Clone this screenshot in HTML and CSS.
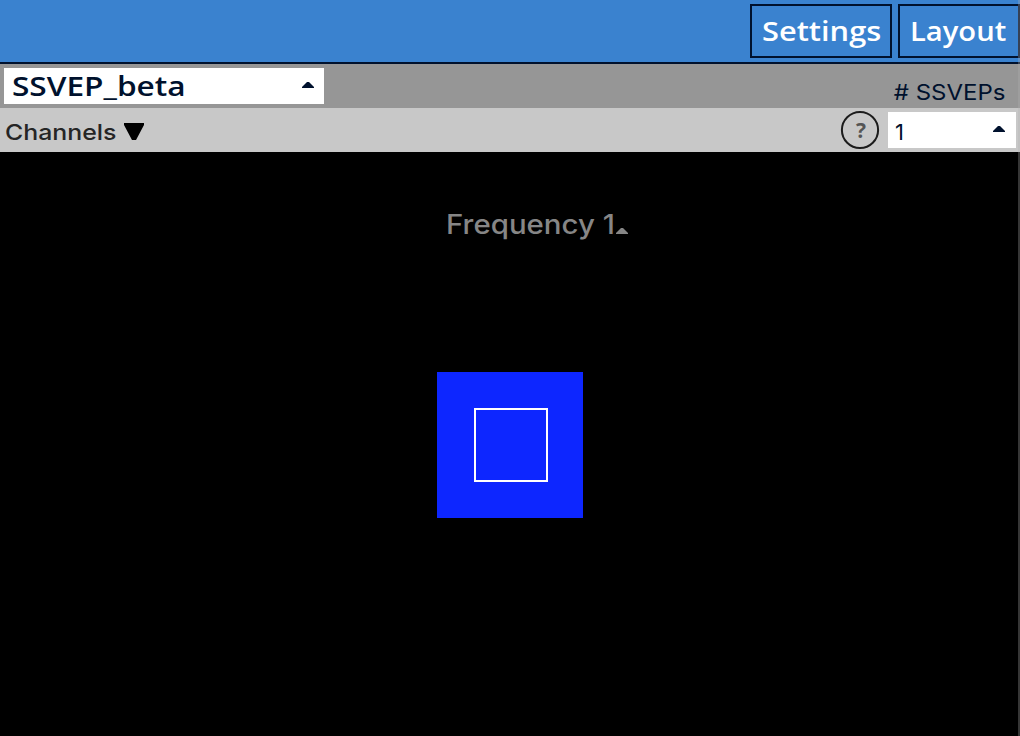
FILE: index.html
```html
<!DOCTYPE html>
<html lang="en">
<head>
<meta charset="utf-8">
<title>SSVEP_beta</title>
<link rel="stylesheet" href="styles.css">
</head>
<body>
<div class="app">
  <header class="topbar">
    <button class="btn settings"><span>Settings</span></button>
    <button class="btn layout"><span>Layout</span></button>
  </header>
  <div class="titlebar">
    <div class="select widget"><span class="widget-name">SSVEP_beta</span><svg class="arrow" width="12" height="6" viewBox="0 0 12 6"><path d="M5 0h2l5 5v1H0V5z"/></svg></div>
    <span class="count-label"># SSVEPs</span>
  </div>
  <div class="toolbar">
    <span class="channels">Channels</span>
    <svg class="down" width="20" height="17" viewBox="0 0 20 17"><path d="M0 0h20v2l-8 15H8L0 2z"/></svg>
    <div class="help"><svg width="40" height="40" viewBox="0 0 40 40"><circle cx="20" cy="20" r="18.1"/></svg><span>?</span></div>
    <div class="select count"><span class="count-value">1</span><svg class="arrow" width="12" height="6" viewBox="0 0 12 6"><path d="M5 0h2l5 5v1H0V5z"/></svg></div>
  </div>
  <main class="stage">
    <div class="frequency"><span>Frequency 1</span><svg width="12" height="6" viewBox="0 0 12 6"><path d="M5 0h2l5 5v1H0V5z"/></svg></div>
    <div class="stimulus"><div class="inner"></div></div>
  </main>
  <div class="edge"></div>
</div>
</body>
</html>
```
FILE: styles.css
```css
* { box-sizing: border-box; }
body { margin: 0; background: #000; }
.app {
  position: relative;
  width: 1020px;
  height: 736px;
  overflow: hidden;
  display: flex;
  flex-direction: column;
  font-family: "Open Sans", sans-serif;
  color: #00112d;
  white-space: nowrap;
}
.topbar {
  height: 64px;
  flex: none;
  display: flex;
  justify-content: flex-end;
  gap: 6px;
  padding-top: 4px;
  background: #3a82cf;
  border-bottom: 2px solid #00112d;
}
.btn {
  height: 54px;
  padding: 0 0 0 10px;
  border: 2px solid #00112d;
  background: #3a82cf;
  color: #fff;
  font: 600 27px/50px "Open Sans", sans-serif;
  text-align: left;
}
.btn span { display: inline-block; transform-origin: 0 50%; }
.settings { width: 142px; }
.settings span { transform: scaleX(1.14); }
.layout { width: 122px; }
.layout span { transform: scaleX(1.08); }
.titlebar {
  height: 44px;
  flex: none;
  display: flex;
  justify-content: space-between;
  padding: 4px 15px 4px 4px;
  background: #969696;
}
.select {
  height: 36px;
  display: flex;
  align-items: center;
  justify-content: space-between;
  background: #fff;
}
.widget { width: 320px; padding: 0 10px 0 8px; }
.widget-name {
  font-size: 27px;
  font-weight: 600;
  line-height: 36px;
  transform: scaleX(1.17);
  transform-origin: 0 50%;
}
.arrow { fill: #00112d; margin-bottom: 2px; }
.count-label {
  font: 400 22px/48px Inter, sans-serif;
  transform: scaleX(1.09);
  transform-origin: 100% 50%;
}
.toolbar {
  height: 44px;
  flex: none;
  display: flex;
  align-items: center;
  padding: 0 4px 0 5px;
  background: #c8c8c8;
}
.channels {
  width: 119px;
  color: #252525;
  font: 500 22px/40px Inter, sans-serif;
  padding-top: 4px;
  transform: scaleX(1.13);
  transform-origin: 0 50%;
}
.down { fill: #000; margin-top: 2px; }
.help {
  display: grid;
  place-items: center;
  width: 40px;
  height: 40px;
  margin-left: auto;
  margin-right: 8px;
}
.help > * { grid-area: 1 / 1; }
.help circle { fill: none; stroke: #1c1c1c; stroke-width: 2; }
.help span { font-size: 21px; font-weight: 700; line-height: 38px; padding-left: 2px; color: #555; }
.count { width: 128px; padding: 0 11px 0 7px; }
.count-value { font: 400 22px/36px Inter, sans-serif; padding-top: 4px; }
.stage {
  flex: 1;
  display: flex;
  flex-direction: column;
  align-items: flex-start;
  background: #000;
}
.frequency {
  display: flex;
  justify-content: space-between;
  align-items: flex-end;
  width: 182px;
  height: 40px;
  margin: 54px 0 0 446px;
  color: #868686;
  font: 500 27px/38px Inter, sans-serif;
}
.frequency span {
  height: 40px;
  transform: scaleX(1.09);
  transform-origin: 0 50%;
}
.frequency svg { fill: #868686; margin-bottom: 12px; }
.stimulus {
  width: 146px;
  height: 146px;
  margin: 126px 0 0 437px;
  padding: 36px 35px 36px 37px;
  background: #0d26ff;
}
.inner { height: 74px; border: 2px solid #fff; }
.edge {
  position: absolute;
  top: 0;
  right: 0;
  width: 2px;
  height: 736px;
  background: rgba(180, 180, 180, 0.3);
}
```
